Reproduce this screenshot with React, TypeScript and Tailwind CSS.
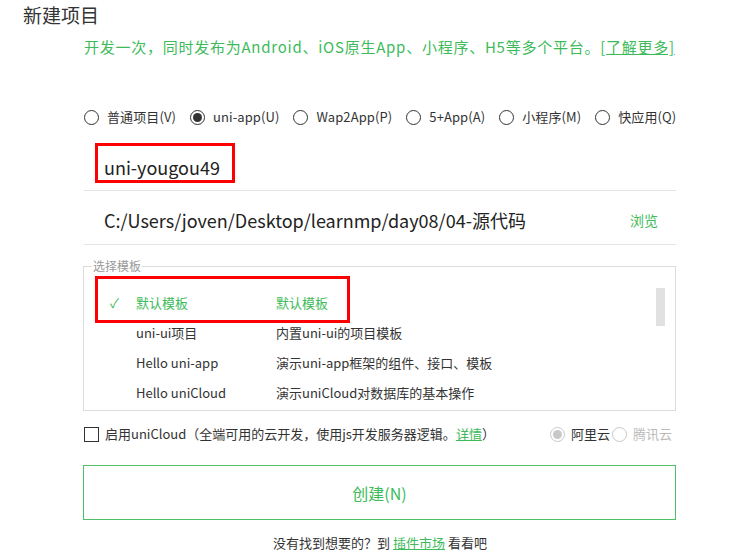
const font = { fontFamily: '"Noto Sans CJK SC", "Noto Sans", sans-serif' };

const projectTypes = [
  { label: "普通项目(V)", checked: false },
  { label: "uni-app(U)", checked: true },
  { label: "Wap2App(P)", checked: false },
  { label: "5+App(A)", checked: false },
  { label: "小程序(M)", checked: false },
  { label: "快应用(Q)", checked: false },
];

const templates = [
  { name: "默认模板", desc: "默认模板", active: true },
  { name: "uni-ui项目", desc: "内置uni-ui的项目模板", active: false },
  { name: "Hello uni-app", desc: "演示uni-app框架的组件、接口、模板", active: false },
  { name: "Hello uniCloud", desc: "演示uniCloud对数据库的基本操作", active: false },
];

function Radio({ checked, disabled }: { checked: boolean; disabled?: boolean }) {
  const color = disabled ? "border-[#c8c8c8]" : "border-[#333]";
  return (
    <span className={`w-[15px] h-[15px] rounded-full border ${color} flex items-center justify-center bg-white`}>
      {checked && <span className={`w-[9px] h-[9px] rounded-full ${disabled ? "bg-[#c8c8c8]" : "bg-[#333]"}`} />}
    </span>
  );
}

export default function App() {
  return (
    <div className="w-[742px] h-[552px] bg-white text-[#333] overflow-hidden" style={font}>
      <h1 className="pl-[23px] pt-[2px] h-[30px] text-[19px] leading-[26px] font-normal text-[#333]">新建项目</h1>

      <div className="ml-[84px] w-[620px]">
        <p className="mt-[4px] h-[26px] text-[15px] leading-[26px] tracking-[0.75px] text-[#3dbb5a] whitespace-nowrap">
          开发一次，同时发布为Android、iOS原生App、小程序、H5等多个平台。<span className="underline">[了解更多]</span>
        </p>

        <div className="mt-[46px] h-[22px] flex items-center text-[13px] leading-[20px] tracking-[0.1px] whitespace-nowrap">
          {projectTypes.map((t) => (
            <label key={t.label} className="flex items-center mr-[14px] last:mr-0">
              <Radio checked={t.checked} />
              <span className="ml-[8px]">{t.label}</span>
            </label>
          ))}
        </div>
      </div>

      <div className="ml-[84px] w-[592px]">
        <div className="relative h-[63px] border-b border-[#e5e5e5]">
          <div className="pl-[20px] pt-[26px] text-[18px] leading-[26px] text-[#222]">uni-yougou49</div>
          <div className="absolute left-[11px] top-[15px] w-[140px] h-[40px] border-[3px] border-[#ff0000]" />
        </div>

        <div className="h-[54px] border-b border-[#e5e5e5] flex items-center justify-between pt-[6px] pl-[20px] pr-[18px]">
          <span className="text-[18px] text-[#222]">C:/Users/joven/Desktop/learnmp/day08/04-源代码</span>
          <span className="text-[14px] text-[#3dbb5a]">浏览</span>
        </div>

        <fieldset className="relative mt-[14px] -ml-[1px] w-[593px] h-[152px] border border-[#dcdcdc] px-[12px]">
          <legend className="ml-[-4px] px-[1px] text-[12px] leading-[14px] text-[#999]">选择模板</legend>
          <div className="pt-[15px]">
            {templates.map((t) => (
              <div
                key={t.name}
                className={`h-[30px] flex items-center text-[13px] ${t.active ? "text-[#3dbb5a]" : "text-[#333]"}`}
              >
                <span className="w-[14px] ml-[14px] text-[13px]">{t.active ? "✓" : ""}</span>
                <span className="w-[140px] ml-[12px]">{t.name}</span>
                <span>{t.desc}</span>
              </div>
            ))}
          </div>
          <div className="absolute left-[11px] top-[3px] w-[255px] h-[47px] border-[3px] border-[#ff0000]" />
          <div className="absolute left-[572px] top-[15px] w-[9px] h-[38px] bg-[#e1e1e1]" />
        </fieldset>

        <div className="mt-[12px] h-[22px] flex items-center justify-between text-[13px] whitespace-nowrap">
          <label className="flex items-center">
            <span className="w-[15px] h-[15px] border border-[#333] bg-white" />
            <span className="ml-[6px]">
              启用uniCloud（全端可用的云开发，使用js开发服务器逻辑。<span className="text-[#3dbb5a] underline">详情</span>）
            </span>
          </label>
          <div className="flex items-center mr-[4px]">
            <Radio checked disabled />
            <span className="ml-[6px] mr-[2px] text-[#333]">阿里云</span>
            <Radio checked={false} disabled />
            <span className="ml-[6px] text-[#bbb]">腾讯云</span>
          </div>
        </div>

        <button className="mt-[20px] -ml-[1px] w-[593px] h-[55px] border border-[#4fc066] bg-white text-[16px] text-[#3dbb5a]">
          创建(N)
        </button>

        <p className="mt-[13px] text-center text-[13px] leading-[20px] text-[#333]">
          没有找到想要的？到 <span className="text-[#3dbb5a] underline">插件市场</span> 看看吧
        </p>
      </div>
    </div>
  );
}
